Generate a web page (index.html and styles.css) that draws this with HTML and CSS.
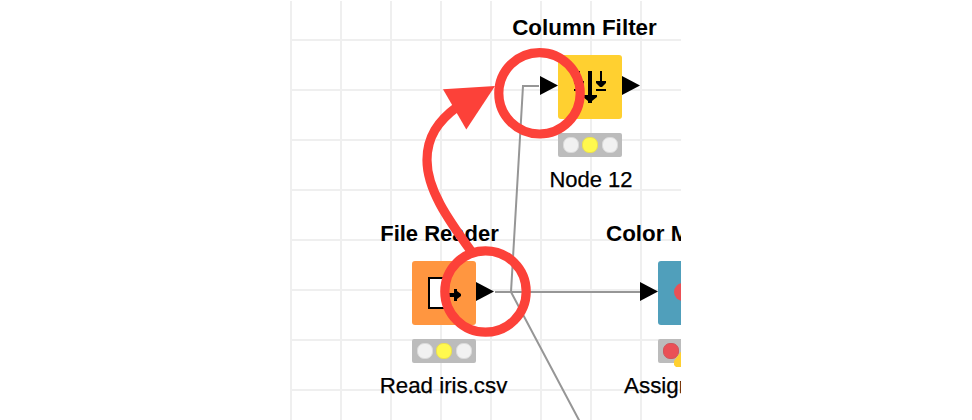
FILE: index.html
```html
<!DOCTYPE html>
<html lang="en">
<head>
<meta charset="utf-8">
<title>Workflow</title>
<link rel="stylesheet" href="styles.css">
</head>
<body>
<main class="canvas">
  <svg class="layer" viewBox="290 1 391 419">
    <g class="edge">
      <path d="M495 292H640"/>
      <path d="M539 86H523L511 292L580 422"/>
    </g>
  </svg>

  <section class="node node-filter">
    <h2 class="title">Column Filter</h2>
    <div class="box yellow">
      <svg class="icon" viewBox="0 0 64 64">
        <path d="M20 16h2v10h4v2l-4 4h-2l-4-4v-2h4zM16 34h10v2H16zM42 16h2v10h4v2l-4 4h-2l-4-4v-2h4zM38 34h10v2H38z"/>
        <path d="M30 16h4v24h5v2l-5 4v2h-4v-2l-5-4v-2h5z"/>
      </svg>
      <i class="port in"></i><i class="port out"></i>
    </div>
    <div class="status"><i class="lamp"></i><i class="lamp on"></i><i class="lamp"></i></div>
    <p class="label">Node 12</p>
  </section>

  <section class="node node-reader">
    <h2 class="title">File Reader</h2>
    <div class="box orange">
      <svg class="icon" viewBox="0 0 64 64">
        <path class="sheet" d="M17 17h18v30H17z"/>
        <path d="M34 32h8v-4h3v2l4 3v2l-4 3v2h-3v-4h-8z"/>
      </svg>
      <i class="port out"></i>
    </div>
    <div class="status"><i class="lamp"></i><i class="lamp on"></i><i class="lamp"></i></div>
    <p class="label">Read iris.csv</p>
  </section>

  <section class="node node-color">
    <h2 class="title">Color M</h2>
    <div class="box blue">
      <svg class="icon" viewBox="0 0 64 64"><circle class="dot" cx="25" cy="31" r="9"/></svg>
      <i class="port in"></i>
    </div>
    <div class="status">
      <i class="lamp stop"></i><i class="lamp"></i><i class="lamp"></i>
      <svg class="warning" viewBox="0 0 32 28"><path d="M16 0L32 28H2L0 26V22Z"/></svg>
    </div>
    <p class="label">Assign</p>
  </section>

  <svg class="layer" viewBox="290 1 391 419">
    <g class="mark">
      <circle cx="539.5" cy="93.3" r="40.7"/>
      <circle cx="485.5" cy="291.5" r="40.7"/>
      <path d="M471 251C447 218 427 189 427 160C427 137 438 121 457 107"/>
    </g>
    <path class="arrowhead" d="M443 89.3L495 86L466.3 129.5Z"/>
  </svg>
</main>
</body>
</html>
```
FILE: styles.css
```css
body {
  margin: 0;
  background: #fff;
  font-family: "Liberation Sans", Arial, sans-serif;
  color: #000;
}

.canvas {
  position: relative;
  width: 391px;
  height: 419px;
  margin: 1px 0 0 290px;
  overflow: hidden;
  background-image:
    linear-gradient(90deg, #efefef 2px, transparent 2px),
    linear-gradient(#efefef 2px, transparent 2px);
  background-size: 50px 50px;
  background-position: 0 0, 0 38px;
}

.layer {
  position: absolute;
  inset: 0;
  width: 391px;
  height: 419px;
}

.edge { fill: none; stroke: #969696; stroke-width: 2; }
.mark { fill: none; stroke: #fc4139; stroke-width: 9.2; }
.arrowhead { fill: #fc4139; }

.node {
  position: absolute;
  width: 200px;
  display: flex;
  flex-direction: column;
  align-items: center;
}
.node-filter { left: 200px; top: 14px; }
.node-reader { left: 54px; top: 220px; }
.node-color { left: 368px; top: 220px; align-items: flex-start; }

.title, .label {
  margin: 0;
  font-size: 22.4px;
  line-height: 26px;
  white-space: nowrap;
}
.title { margin-bottom: 14px; }
.label { margin-top: 10px; -webkit-text-stroke: 0.25px #000; }
.node-filter .title { margin-left: -11px; letter-spacing: 0.03px; }
.node-filter .label { margin-left: 2px; font-size: 22px; }
.node-reader .title { margin-left: -9px; font-size: 22px; }
.node-reader .label { margin-left: -1px; font-size: 22.3px; }
.node-color .title { margin-left: -52px; }
.node-color .label { margin-left: -34px; }

.box {
  position: relative;
  width: 64px;
  height: 64px;
  border-radius: 3px;
}
.yellow { background: #ffd030; }
.orange { background: #ff9640; }
.blue { background: #509fbb; }

.icon { display: block; width: 64px; height: 64px; }
.sheet { fill: #fff; stroke: #000; stroke-width: 2; }
.dot { fill: #ea5056; }

.port {
  position: absolute;
  top: 21px;
  width: 18px;
  height: 19px;
  background: #000;
  clip-path: polygon(0 0, 100% 50%, 0 100%);
}
.in { right: 64px; }
.out { left: 64px; }

.status {
  position: relative;
  display: flex;
  justify-content: center;
  align-items: center;
  gap: 3.5px;
  width: 64px;
  height: 24px;
  margin-top: 14px;
  border-radius: 2px;
  background: #bcbcbc;
}
.lamp {
  box-sizing: border-box;
  width: 16px;
  height: 16px;
  border: 1px solid #dadada;
  border-radius: 7px;
  background: #f1f1f1;
}
.on { background: #fff94e; border-color: #eadf50; }
.stop { background: #ea5056; border-color: #cf555b; }

.warning {
  position: absolute;
  left: 16px;
  top: 0;
  width: 32px;
  height: 28px;
  fill: #ffd030;
}
```
